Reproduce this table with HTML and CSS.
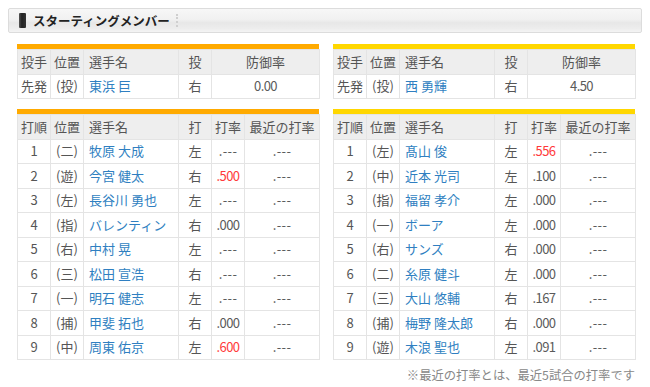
FILE: index.html
```html
<!DOCTYPE html>
<html lang="ja">
<head>
<meta charset="utf-8">
<title>スターティングメンバー</title>
<link rel="stylesheet" href="styles.css">
</head>
<body>
<div class="section-head">
  <span class="mark"></span>
  <h2 class="title">スターティングメンバー</h2>
  <span class="sep"></span>
</div>

<div class="lineup">
  <div class="box orange">
    <table class="tbl pitcher">
      <colgroup><col class="c1"><col class="c2"><col class="c3"><col class="c4"><col class="c5w"></colgroup>
      <thead><tr><th>投手</th><th>位置</th><th class="l">選手名</th><th>投</th><th>防御率</th></tr></thead>
      <tbody><tr><td>先発</td><td>(投)</td><td class="name">東浜 巨</td><td>右</td><td class="num">0.00</td></tr></tbody>
    </table>
  </div>
  <div class="box yellow">
    <table class="tbl pitcher">
      <colgroup><col class="c1"><col class="c2"><col class="c3"><col class="c4"><col class="c5w"></colgroup>
      <thead><tr><th>投手</th><th>位置</th><th class="l">選手名</th><th>投</th><th>防御率</th></tr></thead>
      <tbody><tr><td>先発</td><td>(投)</td><td class="name">西 勇輝</td><td>右</td><td class="num">4.50</td></tr></tbody>
    </table>
  </div>

  <div class="box orange">
    <table class="tbl batter">
      <colgroup><col class="c1"><col class="c2"><col class="c3"><col class="c4"><col class="c5"><col class="c6"></colgroup>
      <thead><tr><th>打順</th><th>位置</th><th class="l">選手名</th><th>打</th><th>打率</th><th>最近の打率</th></tr></thead>
      <tbody>
        <tr><td>1</td><td>(二)</td><td class="name">牧原 大成</td><td>左</td><td class="num nil">.---</td><td class="num nil">.---</td></tr>
        <tr><td>2</td><td>(遊)</td><td class="name">今宮 健太</td><td>右</td><td class="num hot">.500</td><td class="num nil">.---</td></tr>
        <tr><td>3</td><td>(左)</td><td class="name">長谷川 勇也</td><td>左</td><td class="num nil">.---</td><td class="num nil">.---</td></tr>
        <tr><td>4</td><td>(指)</td><td class="name">バレンティン</td><td>右</td><td class="num">.000</td><td class="num nil">.---</td></tr>
        <tr><td>5</td><td>(右)</td><td class="name">中村 晃</td><td>左</td><td class="num nil">.---</td><td class="num nil">.---</td></tr>
        <tr><td>6</td><td>(三)</td><td class="name">松田 宣浩</td><td>右</td><td class="num nil">.---</td><td class="num nil">.---</td></tr>
        <tr><td>7</td><td>(一)</td><td class="name">明石 健志</td><td>左</td><td class="num nil">.---</td><td class="num nil">.---</td></tr>
        <tr><td>8</td><td>(捕)</td><td class="name">甲斐 拓也</td><td>右</td><td class="num">.000</td><td class="num nil">.---</td></tr>
        <tr><td>9</td><td>(中)</td><td class="name">周東 佑京</td><td>左</td><td class="num hot">.600</td><td class="num nil">.---</td></tr>
      </tbody>
    </table>
  </div>
  <div class="box yellow">
    <table class="tbl batter">
      <colgroup><col class="c1"><col class="c2"><col class="c3"><col class="c4"><col class="c5"><col class="c6"></colgroup>
      <thead><tr><th>打順</th><th>位置</th><th class="l">選手名</th><th>打</th><th>打率</th><th>最近の打率</th></tr></thead>
      <tbody>
        <tr><td>1</td><td>(左)</td><td class="name">髙山 俊</td><td>左</td><td class="num hot">.556</td><td class="num nil">.---</td></tr>
        <tr><td>2</td><td>(中)</td><td class="name">近本 光司</td><td>左</td><td class="num">.100</td><td class="num nil">.---</td></tr>
        <tr><td>3</td><td>(指)</td><td class="name">福留 孝介</td><td>左</td><td class="num">.000</td><td class="num nil">.---</td></tr>
        <tr><td>4</td><td>(一)</td><td class="name">ボーア</td><td>左</td><td class="num">.000</td><td class="num nil">.---</td></tr>
        <tr><td>5</td><td>(右)</td><td class="name">サンズ</td><td>右</td><td class="num">.000</td><td class="num nil">.---</td></tr>
        <tr><td>6</td><td>(二)</td><td class="name">糸原 健斗</td><td>左</td><td class="num">.000</td><td class="num nil">.---</td></tr>
        <tr><td>7</td><td>(三)</td><td class="name">大山 悠輔</td><td>右</td><td class="num">.167</td><td class="num nil">.---</td></tr>
        <tr><td>8</td><td>(捕)</td><td class="name">梅野 隆太郎</td><td>右</td><td class="num">.000</td><td class="num nil">.---</td></tr>
        <tr><td>9</td><td>(遊)</td><td class="name">木浪 聖也</td><td>左</td><td class="num">.091</td><td class="num nil">.---</td></tr>
      </tbody>
    </table>
  </div>

  <p class="note">※最近の打率とは、最近5試合の打率です</p>
</div>
</body>
</html>
```

FILE: styles.css
```css
html, body {
  margin: 0;
  padding: 0;
  background: #fff;
}
body {
  margin: 8px;
  font-family: "Noto Sans CJK JP", "Noto Sans", sans-serif;
  font-size: 13px;
  color: #555;
}

.section-head {
  height: 23px;
  border: 1px solid #dcdcdc;
  border-radius: 2px;
  background: linear-gradient(#f7f7f7 0%, #f1f1f1 45%, #e7e7e7 60%, #ededed 85%, #f4f4f4 100%);
  display: flex;
  align-items: center;
  padding-left: 10px;
}
.mark {
  width: 7px;
  height: 15px;
  background: linear-gradient(90deg, #555 0%, #222 40%, #333 100%);
  border-radius: 1px;
}
.title {
  margin: 0 0 0 7px;
  font-size: 12.5px;
  font-weight: bold;
  color: #222;
  line-height: 23px;
}
.sep {
  width: 0;
  height: 13px;
  margin-left: 6px;
  border-left: 2px dotted #cfcfcf;
}

.lineup {
  display: grid;
  grid-template-columns: 302px 302px;
  column-gap: 14px;
  row-gap: 10px;
  padding: 11px 0 0 9px;
}
.box {
  border-top: 5px solid #ffaa00;
}
.box.yellow {
  border-top-color: #ffd700;
}

.tbl {
  width: 302px;
  table-layout: fixed;
  border-collapse: collapse;
}
.tbl th, .tbl td {
  border: 1px solid #e4e4e4;
  padding: 0;
  height: 23.5px;
  text-align: center;
  font-weight: normal;
  white-space: nowrap;
  line-height: 16px;
}
.tbl th {
  background: #eeeeee;
}
.tbl td {
  background: #fff;
}
.tbl th.l, .tbl td.name {
  text-align: left;
  padding-left: 5px;
}
.tbl td.name {
  color: #2f7fc1;
}
.tbl td.num {
  letter-spacing: -0.6px;
  color: #5a5a5a;
}
.tbl td.nil {
  letter-spacing: 0.4px;
}
.tbl td.hot {
  color: #ff3a3a;
}
.c1 { width: 33px; }
.c2 { width: 33px; }
.c3 { width: 95px; }
.c4 { width: 33px; }
.c5 { width: 33px; }
.c5w { width: 108px; }
.c6 { width: 75px; }

.note {
  grid-column: 2;
  margin: -4px 0 0;
  text-align: right;
  color: #888;
  font-size: 12.3px;
  line-height: 18px;
}
```
